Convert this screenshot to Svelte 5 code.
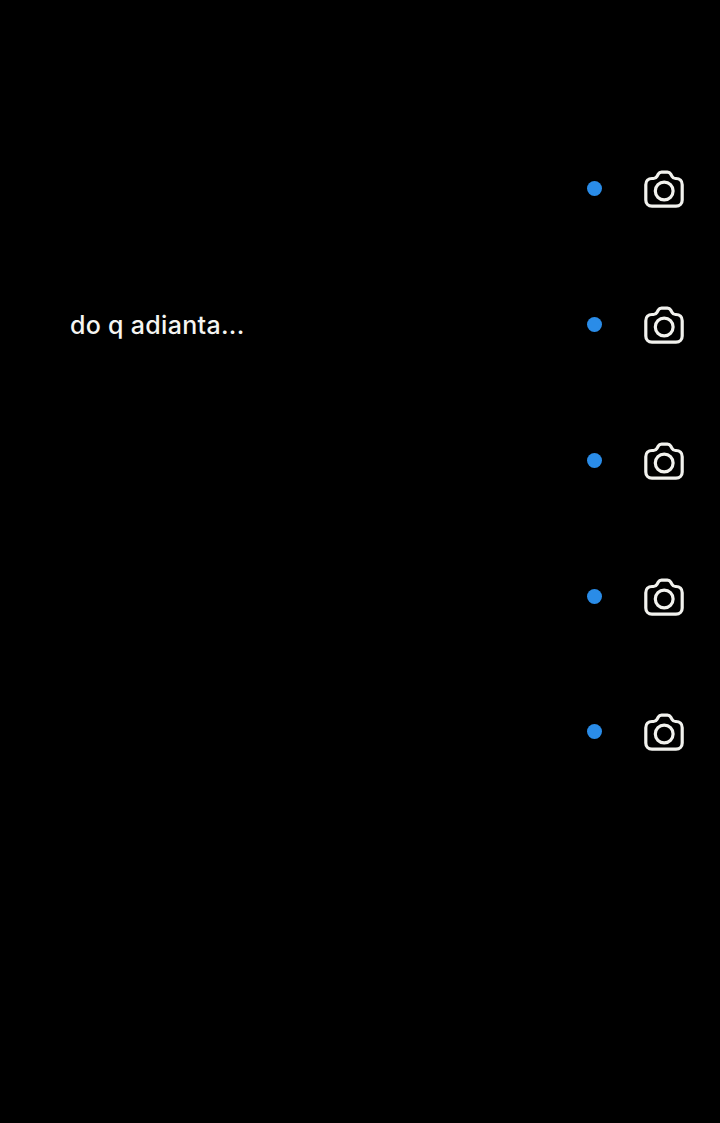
<script>
  const rows = ["", "do q adianta...", "", "", ""];
</script>

<main class="list">
  {#each rows as text}
    <div class="row">
      <p class="text">{text}</p>
      <span class="dot"></span>
      <svg class="camera" viewBox="0 0 40 40" fill="none" stroke="#f2f2ee" stroke-width="3.2" stroke-linejoin="round" aria-hidden="true">
        <path d="M8 9.500h1.500c1.500 0 2.700-.7 3.400-2l1.300-2.300c.8-1.300 1.900-2 3.400-2h5.800c1.500 0 2.600.7 3.400 2l1.300 2.300c.7 1.300 1.900 2 3.400 2H32c3.700 0 6.200 2.500 6.200 6.200v15.300c0 3.700-2.500 6.200-6.200 6.200H8c-3.700 0-6.200-2.500-6.200-6.200V15.700c0-3.700 2.500-6.200 6.200-6.200z" />
        <circle cx="20.200" cy="22" r="8.900" />
      </svg>
    </div>
  {/each}
</main>

<style>
  :global(body) {
    background: #000;
  }
  .list {
    box-sizing: border-box;
    height: 1123px;
    padding-top: 121px;
    background: #000;
    font-family: Inter, "Noto Sans", sans-serif;
  }
  .row {
    display: flex;
    align-items: center;
    height: 135.75px;
    padding: 0 36px 0 70px;
  }
  .text {
    flex: 1;
    margin: 0;
    color: #f5f5f2;
    font-size: 25px;
    font-weight: 500;
    letter-spacing: 0.3px;
  }
  .dot {
    width: 15px;
    height: 15px;
    margin-right: 42.5px;
    border-radius: 50%;
    background: #2a8ce8;
  }
  .camera {
    width: 40px;
    height: 40px;
    margin-top: 1px;
  }
</style>
